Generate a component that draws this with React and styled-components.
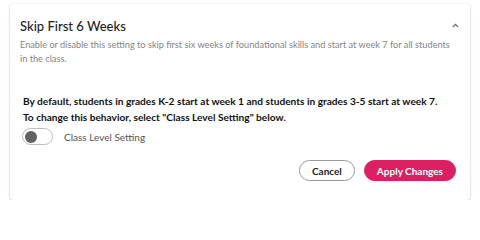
import React, { useState } from 'react';
import styled, { createGlobalStyle } from 'styled-components';

const GlobalStyle = createGlobalStyle`
  body {
    margin: 0;
    background: #ffffff;
    font-family: Lato, "Liberation Sans", sans-serif;
  }
`;

const Card = styled.section`
  box-sizing: border-box;
  width: 460px;
  height: 196px;
  margin: 4px 10px 0;
  background: #fff;
  border-radius: 3px;
  box-shadow: 0 1px 3px rgba(0, 0, 0, 0.22), 0 0 1px rgba(0, 0, 0, 0.08);
  display: flex;
  flex-direction: column;
`;

const Header = styled.div`
  display: flex;
  align-items: flex-start;
  padding: 14px 18px 0 10px;
`;

const HeaderText = styled.div`
  flex: 1;
`;

const Title = styled.h2`
  margin: 0;
  font-size: 13px;
  line-height: 16px;
  font-weight: 500;
  color: #1e1e1e;
`;

const Description = styled.p`
  margin: 4px 0 0;
  font-size: 9.2px;
  line-height: 14px;
  color: #858585;
  width: 432px;
`;

const Chevron = styled.button`
  border: none;
  background: none;
  padding: 0;
  margin-top: 5px;
  color: #666;
  display: flex;
`;

const Body = styled.div`
  padding: 27px 14px 0 13px;
  display: flex;
  flex-direction: column;
`;

const Notice = styled.p`
  margin: 0;
  font-size: 10.15px;
  line-height: 16px;
  font-weight: 700;
  color: #111;
  white-space: nowrap;
`;

const ToggleRow = styled.label`
  display: flex;
  align-items: center;
  gap: 11px;
  margin-top: 3px;
  margin-left: -1px;
  font-size: 10px;
  color: #555;
`;

const Track = styled.span`
  box-sizing: border-box;
  width: 31px;
  height: 17px;
  border-radius: 9px;
  border: 1px solid #bdbdbd;
  background: ${p => (p.$on ? '#dc1f63' : '#fff')};
  display: flex;
  align-items: center;
  padding: 0 2px;
  justify-content: ${p => (p.$on ? 'flex-end' : 'flex-start')};
`;

const Knob = styled.span`
  width: 12px;
  height: 12px;
  border-radius: 50%;
  background: ${p => (p.$on ? '#fff' : '#616161')};
`;

const Actions = styled.div`
  display: flex;
  justify-content: flex-end;
  gap: 9px;
  margin-top: 15px;
`;

const PillButton = styled.button`
  box-sizing: border-box;
  height: 21px;
  border-radius: 11px;
  font-family: inherit;
  font-size: 10px;
  font-weight: 700;
  padding: 0 ${p => (p.$primary ? '12px' : '12px')};
  border: 1px solid ${p => (p.$primary ? '#dc1f63' : '#999')};
  background: ${p => (p.$primary ? '#dc1f63' : '#fff')};
  color: ${p => (p.$primary ? '#fff' : '#222')};
  min-width: ${p => (p.$primary ? '88px' : '55px')};
  cursor: pointer;
`;

export default function App() {
  const [on, setOn] = useState(false);
  return (
    <>
      <GlobalStyle />
      <Card>
        <Header>
          <HeaderText>
            <Title>Skip First 6 Weeks</Title>
            <Description>
              Enable or disable this setting to skip first six weeks of foundational skills and start at week 7 for all students in the class.
            </Description>
          </HeaderText>
          <Chevron aria-label="collapse">
            <svg width="7" height="5" viewBox="0 0 7 5" fill="none" stroke="currentColor" strokeWidth="1.2">
              <path d="M0.8 4.2 L3.5 1.3 L6.2 4.2" />
            </svg>
          </Chevron>
        </Header>
        <Body>
          <Notice>
            By default, students in grades K-2 start at week 1 and students in grades 3-5 start at week 7.
            <br />
            To change this behavior, select "Class Level Setting" below.
          </Notice>
          <ToggleRow onClick={() => setOn(!on)}>
            <Track $on={on}>
              <Knob $on={on} />
            </Track>
            Class Level Setting
          </ToggleRow>
          <Actions>
            <PillButton>Cancel</PillButton>
            <PillButton $primary>Apply Changes</PillButton>
          </Actions>
        </Body>
      </Card>
    </>
  );
}
